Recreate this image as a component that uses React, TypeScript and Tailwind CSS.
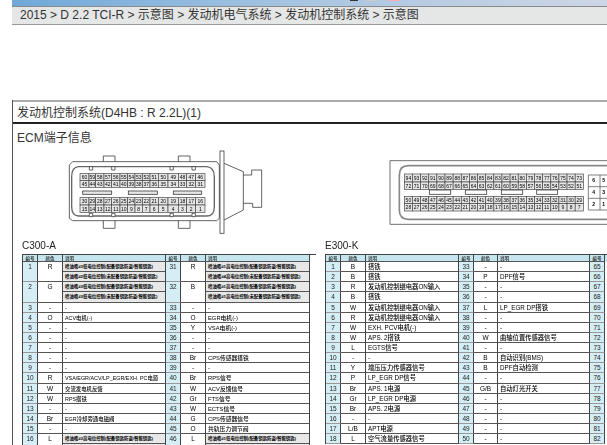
const cjk = "'Liberation Sans','Noto Sans CJK SC',sans-serif";

type Row = { n: string; c: string; d: string; d2?: string };

const inj = (a: string, b: string) => `喷油嘴#${a}${b}电位控制(配备钥匙防盗/智能钥匙)`;
const inj2 = (a: string, b: string) => `喷油嘴#${a}${b}电位控制(未配备钥匙防盗/智能钥匙)`;

const cA1: Row[] = [
  { n: '1', c: 'R', d: inj('3', '低'), d2: inj2('2', '低') },
  { n: '2', c: 'G', d: inj('3', '低'), d2: inj2('3', '低') },
  { n: '3', c: '-', d: '-' },
  { n: '4', c: 'O', d: 'ACV电机(-)' },
  { n: '5', c: '-', d: '-' },
  { n: '6', c: '-', d: '-' },
  { n: '7', c: '-', d: '-' },
  { n: '8', c: '-', d: '-' },
  { n: '9', c: '-', d: '-' },
  { n: '10', c: 'R', d: 'VSA/EGR/ACV/LP_EGR/EXH. PC电源' },
  { n: '11', c: 'W', d: '交流发电机反馈' },
  { n: '12', c: 'W', d: 'RPS搭铁' },
  { n: '13', c: '-', d: '-' },
  { n: '14', c: 'Br', d: 'EGR冷却旁通电磁阀' },
  { n: '15', c: '-', d: '-' },
  { n: '16', c: 'L', d: inj('3', '高'), d2: inj2('2', '高') },
];
const cA2: Row[] = [
  { n: '31', c: 'R', d: inj('1', '高'), d2: inj2('4', '高') },
  { n: '32', c: 'B', d: inj('1', '高'), d2: inj2('1', '高') },
  { n: '33', c: '-', d: '-' },
  { n: '34', c: 'O', d: 'EGR电机(-)' },
  { n: '35', c: 'Y', d: 'VSA电机(-)' },
  { n: '36', c: '-', d: '-' },
  { n: '37', c: '-', d: '-' },
  { n: '38', c: 'Br', d: 'CPS传感器搭铁' },
  { n: '39', c: '-', d: '-' },
  { n: '40', c: 'Br', d: 'RPS信号' },
  { n: '41', c: 'W', d: 'ACV反馈信号' },
  { n: '42', c: 'Gr', d: 'FTS信号' },
  { n: '43', c: 'W', d: 'ECTS信号' },
  { n: '44', c: 'G', d: 'CPS传感器信号' },
  { n: '45', c: 'O', d: '共轨压力调节阀' },
  { n: '46', c: 'L', d: '喷油嘴#1低电位控制(配备钥匙防盗/智能钥匙)', d2: inj2('4', '低') },
];
const eK1: Row[] = [
  { n: '1', c: 'B', d: '搭铁' },
  { n: '2', c: 'B', d: '搭铁' },
  { n: '3', c: 'R', d: '发动机控制继电器ON输入' },
  { n: '4', c: 'B', d: '搭铁' },
  { n: '5', c: 'W', d: '发动机控制继电器ON输入' },
  { n: '6', c: 'R', d: '发动机控制继电器ON输入' },
  { n: '7', c: 'W', d: 'EXH. PCV电机(-)' },
  { n: '8', c: 'W', d: 'APS. 2搭铁' },
  { n: '9', c: 'L', d: 'EGTS信号' },
  { n: '10', c: '-', d: '-' },
  { n: '11', c: 'Y', d: '增压压力传感器信号' },
  { n: '12', c: 'P', d: 'LP_EGR DP信号' },
  { n: '13', c: 'Br', d: 'APS. 1电源' },
  { n: '14', c: 'Gr', d: 'LP_EGR DP电源' },
  { n: '15', c: 'Br', d: 'APS. 2电源' },
  { n: '16', c: '-', d: '-' },
  { n: '17', c: 'L/B', d: 'APT电源' },
  { n: '18', c: 'L', d: '空气流量传感器信号' },
];
const eK2: Row[] = [
  { n: '33', c: '-', d: '-' },
  { n: '34', c: 'P', d: 'DPF信号' },
  { n: '35', c: '-', d: '-' },
  { n: '36', c: '-', d: '-' },
  { n: '37', c: 'L', d: 'LP_EGR DP搭铁' },
  { n: '38', c: '-', d: '-' },
  { n: '39', c: '-', d: '-' },
  { n: '40', c: 'W', d: '曲轴位置传感器信号' },
  { n: '41', c: '-', d: '-' },
  { n: '42', c: 'B', d: '自动识别(BMS)' },
  { n: '43', c: 'B', d: 'DPF自动检测' },
  { n: '44', c: '-', d: '-' },
  { n: '45', c: 'G/B', d: '自动灯光开关' },
  { n: '46', c: '-', d: '-' },
  { n: '47', c: '-', d: '-' },
  { n: '48', c: '-', d: '-' },
  { n: '49', c: '-', d: '-' },
  { n: '50', c: '-', d: '-' },
];
const eK3 = Array.from({ length: 18 }, (_, i) => String(65 + i));

function ColumnGroup({ rows, widths, textClass }: { rows: Row[]; widths: [string, string, string]; textClass: string }) {
  return (
    <div className="flex shrink-0 flex-col">
      <div className="flex h-[7px] bg-[#c6e6ef] text-[4.5px] font-medium leading-[7px] text-[#222] border-b border-[#555]">
        <div className={`${widths[0]} text-center border-r border-[#444]`}>编号</div>
        <div className={`${widths[1]} text-center border-r border-[#444]`}>颜色</div>
        <div className={`${widths[2]} pl-[2px] border-r border-[#444]`}>说明</div>
      </div>
      {rows.map((r) => (
        <div key={r.n} className={`flex ${r.d2 ? 'h-[20.25px]' : 'h-[10.125px]'} text-black`}>
          <div className={`${widths[0]} bg-[#d5eef5] text-center text-[6.5px] leading-[10px] border-r border-r-[#444] border-b border-b-[#999] text-[#222]`}>{r.n}</div>
          <div className={`${widths[1]} text-center text-[6.5px] leading-[10px] border-r border-r-[#444] border-b border-b-[#555]`}>{r.c}</div>
          {r.d2 ? (
            <div className={`${widths[2]} flex flex-col border-r border-[#444] text-[4.4px] font-bold leading-[10px] whitespace-nowrap overflow-hidden`}>
              <div className="h-[10.125px] pl-[2px] border-b border-[#555] bg-[#e8e8e8]">{r.d}</div>
              <div className="h-[10.125px] pl-[2px] border-b border-[#555] bg-[#e8e8e8]">{r.d2}</div>
            </div>
          ) : (
            <div className={`${widths[2]} pl-[2px] ${textClass} font-medium leading-[10px] whitespace-nowrap overflow-hidden border-r border-r-[#444] border-b border-b-[#555]`}>{r.d}</div>
          )}
        </div>
      ))}
    </div>
  );
}

function NumberColumn({ items }: { items: string[] }) {
  return (
    <div className="flex w-[15px] shrink-0 flex-col">
      <div className="h-[7px] bg-[#c6e6ef] text-[4.5px] font-medium leading-[7px] text-center border-b border-[#555] border-r border-r-[#444]">编号</div>
      {items.map((n) => (
        <div key={n} className="h-[10.125px] bg-[#d5eef5] text-center text-[6.5px] leading-[10px] text-[#222] border-b border-b-[#999] border-r border-r-[#444]">{n}</div>
      ))}
    </div>
  );
}

function Pins({ xs, y, h, nums }: { xs: number[]; y: number; h: number; nums: number[] }) {
  return (
    <g>
      {nums.map((n, i) => (
        <g key={n}>
          <rect x={xs[i]} y={y} width={xs[i + 1] - xs[i]} height={h} fill="#e6e6e6" stroke="#444" strokeWidth="2" />
          <text x={(xs[i] + xs[i + 1]) / 2} y={y + h - 5} textAnchor="middle" fontSize="15" fill="#000" stroke="none" fontWeight="500" fontFamily={cjk}>{n}</text>
        </g>
      ))}
    </g>
  );
}

const range = (from: number, to: number) => Array.from({ length: from - to + 1 }, (_, i) => from - i);

function ConnectorA() {
  const xs = [150, 177, 197, 222, 245, 270, 293, 315, 337, 360, 385, 414, 445, 470, 497, 525];
  return (
    <svg viewBox="0 0 720 300" className="h-[100px] w-[240px] shrink-0" fill="none" stroke="#444" strokeWidth="2.5">
      <path d="M118 45 L128 35 H560 L568 45 V205 L560 212 H128 L118 205 Z" />
      <path d="M145 50 H530 Q553 52 553 80 V170 Q553 198 530 198 H145 Q125 196 125 170 V80 Q125 52 145 50 Z" stroke="#666" strokeWidth="4" />
      <path d="M220 35 V18 H255 V35 M445 35 V18 H480 V35 M220 212 V235 H255 V212 M445 212 V235 H480 V212" />
      <path d="M178 50 h10 v10 h-10 z M245 50 h10 v10 h-10 z M420 50 h10 v10 h-10 z M486 50 h10 v10 h-10 z M178 190 h10 v10 h-10 z M245 190 h10 v10 h-10 z M420 190 h10 v10 h-10 z M486 190 h10 v10 h-10 z" fill="#fff" />
      <rect x="570" y="3" width="12" height="247" />
      <path d="M582 40 L640 65 V180 L582 210 M640 75 H665 V60 H695 V172 H668 V160 H640" />
      <rect x="158" y="123" width="87" height="10" fill="#e6e6e6" />
      <rect x="295" y="123" width="87" height="10" fill="#e6e6e6" />
      <rect x="430" y="123" width="85" height="10" fill="#e6e6e6" />
      <Pins xs={xs} y={71} h={21} nums={range(60, 46)} />
      <Pins xs={xs} y={92} h={20} nums={range(45, 31)} />
      <Pins xs={xs} y={143} h={22} nums={range(30, 16)} />
      <Pins xs={xs} y={165} h={22} nums={range(15, 1)} />
    </svg>
  );
}

function ConnectorB() {
  const xs = Array.from({ length: 23 }, (_, i) => 103 + (i * 537) / 22);
  return (
    <svg viewBox="0 0 711 300" className="h-[100px] w-[237px] shrink-0" fill="none" stroke="#444" strokeWidth="2.5">
      <path d="M720 32 H60 V223 H720" stroke="#555" />
      <path d="M720 47 H115 Q88 47 88 75 V180 Q88 208 115 208 H720" stroke="#888" strokeWidth="5" />
      <Pins xs={xs} y={72} h={24} nums={range(94, 73)} />
      <Pins xs={xs} y={96} h={22} nums={range(72, 51)} />
      <Pins xs={xs} y={139} h={22} nums={range(50, 29)} />
      <Pins xs={xs} y={161} h={22} nums={range(28, 7)} />
      <rect x="178" y="120" width="64" height="13" />
      <rect x="286" y="120" width="64" height="13" />
      <rect x="394" y="120" width="64" height="13" />
      <rect x="500" y="120" width="63" height="13" />
      <path d="M720 75 H655 V180 H720 M655 110 H720 M655 145 H720 M690 75 V180" strokeWidth="2" />
      <g fontSize="15" fill="#000" stroke="none" textAnchor="middle" fontFamily={cjk} fontWeight="700">
        <text x="671" y="97">6</text>
        <text x="701" y="97">5</text>
        <text x="671" y="132">4</text>
        <text x="701" y="132">3</text>
        <text x="671" y="167">2</text>
        <text x="701" y="167">1</text>
      </g>
    </svg>
  );
}

export default function App() {
  return (
    <div className="h-[445px] w-[607px] overflow-hidden bg-white pl-[12px] text-[#222]" style={{ fontFamily: cjk }}>
      <div className="flex h-[6px] bg-gradient-to-r from-[#6fa8d8] via-[#a9c6e2] to-[#cdd6e6]">
        <div className="ml-[338px] h-[1px] w-[8px] bg-[#333]" />
        <div className="ml-[8px] h-[1px] w-[12px] bg-[#ccc]" />
        <div className="ml-[10px] h-[1px] w-[12px] bg-[#f2b0b8]" />
      </div>
      <div className="h-[19px] bg-[#e5e7e7] border-y border-t-[#8a8a8a] border-b-[#999] pl-[8px] text-[12px] leading-[17px] text-[#333] whitespace-nowrap">
        2015 &gt; D 2.2 TCI-R &gt; 示意图 &gt; 发动机电气系统 &gt; 发动机控制系统 &gt; 示意图
      </div>

      <div className="mt-[75px] h-[345px] border-l border-[#555]">
        <div className="h-[24px] border-t-2 border-[#aaa] border-b-2 border-b-[#222] pl-[4px] text-[12px] leading-[22px] text-[#333] whitespace-nowrap">
          发动机控制系统(D4HB : R 2.2L)(1)
        </div>
        <div className="h-[26px] pl-[4px] pt-[6px] text-[12px] leading-[16px] text-[#333]">ECM端子信息</div>

        <div className="flex h-[104px] pl-[17px] blur-[0.35px]">
          <ConnectorA />
          <div className="w-[100px] shrink-0" />
          <ConnectorB />
        </div>

        <div className="flex blur-[0.3px]">
          <div className="w-[303px] shrink-0 pl-[9px]">
            <div className="-mt-[13px] h-[13px] text-[10px] leading-[9px]">C300-A</div>
            <div className="flex border-l border-t border-[#444]">
              <ColumnGroup rows={cA1} widths={['w-[15px]', 'w-[25px]', 'w-[103px]']} textClass="text-[5.4px]" />
              <ColumnGroup rows={cA2} widths={['w-[15px]', 'w-[25px]', 'w-[104px]']} textClass="text-[5.8px]" />
            </div>
          </div>
          <div className="w-[294px] shrink-0 pl-[9px]">
            <div className="-mt-[13px] h-[13px] text-[10px] leading-[9px]">E300-K</div>
            <div className="flex border-l border-t border-[#444]">
              <ColumnGroup rows={eK1} widths={['w-[15px]', 'w-[25px]', 'w-[93px]']} textClass="text-[6.3px]" />
              <ColumnGroup rows={eK2} widths={['w-[15px]', 'w-[24px]', 'w-[92px]']} textClass="text-[6.3px]" />
              <NumberColumn items={eK3} />
              <div className="h-[7px] w-[10px] bg-[#c6e6ef]" />
            </div>
          </div>
        </div>
      </div>
    </div>
  );
}
